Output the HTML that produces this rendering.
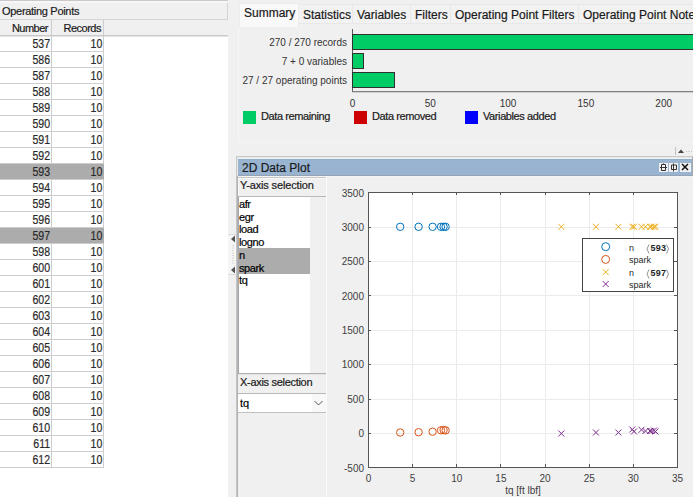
<!DOCTYPE html>
<html><head><meta charset="utf-8"><style>
*{margin:0;padding:0;box-sizing:border-box}
html,body{width:693px;height:497px;overflow:hidden;background:#f0f0f0;font-family:"Liberation Sans", sans-serif;color:#000}
.a{position:absolute}
.t{position:absolute;white-space:nowrap;line-height:1;-webkit-text-stroke:0.2px currentColor}
</style></head>
<body>
<div class="a" style="left:0px;top:0px;width:228px;height:1px;background:#c9c9c9"></div><div class="a" style="left:0px;top:1px;width:228px;height:2px;background:#f7f7f7"></div><div class="a" style="left:0px;top:3px;width:228px;height:17px;background:#f0f0f0;border-right:1px solid #d4d4d4;border-bottom:1px solid #d4d4d4"></div><div class="t" style="left:2px;top:6px;font-size:11px;letter-spacing:-0.3px;color:#1a1a1a">Operating Points</div><div class="a" style="left:0px;top:20px;width:228px;height:15px;background:#f0f0f0"></div><div class="a" style="left:0px;top:35px;width:228px;height:1px;background:#cacaca"></div><div class="a" style="left:51px;top:20px;width:1px;height:15px;background:#cdcdcd"></div><div class="a" style="left:103px;top:20px;width:1px;height:15px;background:#cdcdcd"></div><div class="t" style="right:645px;top:23px;font-size:11px;text-align:right;letter-spacing:-0.5px;color:#1a1a1a">Number</div><div class="t" style="right:592px;top:23px;font-size:11px;text-align:right;letter-spacing:-0.5px;color:#1a1a1a">Records</div><div class="a" style="left:0px;top:36px;width:228px;height:461px;background:#ffffff"></div><div class="a" style="left:0px;top:36px;width:228px;height:1px;background:#e4e4e4"></div><div class="a" style="left:51px;top:36px;width:1px;height:432px;background:#cdcdcd"></div><div class="a" style="left:103px;top:36px;width:1px;height:432px;background:#cdcdcd"></div><div class="a" style="left:0px;top:51px;width:104px;height:1px;background:#cdcdcd"></div><div class="t" style="right:643px;top:38px;font-size:12px;text-align:right;transform:scaleX(0.88);transform-origin:right;color:#2a2a2a">537</div><div class="t" style="right:591px;top:38px;font-size:12px;text-align:right;transform:scaleX(0.88);transform-origin:right;color:#2a2a2a">10</div><div class="a" style="left:0px;top:67px;width:104px;height:1px;background:#cdcdcd"></div><div class="t" style="right:643px;top:54px;font-size:12px;text-align:right;transform:scaleX(0.88);transform-origin:right;color:#2a2a2a">586</div><div class="t" style="right:591px;top:54px;font-size:12px;text-align:right;transform:scaleX(0.88);transform-origin:right;color:#2a2a2a">10</div><div class="a" style="left:0px;top:83px;width:104px;height:1px;background:#cdcdcd"></div><div class="t" style="right:643px;top:70px;font-size:12px;text-align:right;transform:scaleX(0.88);transform-origin:right;color:#2a2a2a">587</div><div class="t" style="right:591px;top:70px;font-size:12px;text-align:right;transform:scaleX(0.88);transform-origin:right;color:#2a2a2a">10</div><div class="a" style="left:0px;top:99px;width:104px;height:1px;background:#cdcdcd"></div><div class="t" style="right:643px;top:86px;font-size:12px;text-align:right;transform:scaleX(0.88);transform-origin:right;color:#2a2a2a">588</div><div class="t" style="right:591px;top:86px;font-size:12px;text-align:right;transform:scaleX(0.88);transform-origin:right;color:#2a2a2a">10</div><div class="a" style="left:0px;top:115px;width:104px;height:1px;background:#cdcdcd"></div><div class="t" style="right:643px;top:102px;font-size:12px;text-align:right;transform:scaleX(0.88);transform-origin:right;color:#2a2a2a">589</div><div class="t" style="right:591px;top:102px;font-size:12px;text-align:right;transform:scaleX(0.88);transform-origin:right;color:#2a2a2a">10</div><div class="a" style="left:0px;top:131px;width:104px;height:1px;background:#cdcdcd"></div><div class="t" style="right:643px;top:118px;font-size:12px;text-align:right;transform:scaleX(0.88);transform-origin:right;color:#2a2a2a">590</div><div class="t" style="right:591px;top:118px;font-size:12px;text-align:right;transform:scaleX(0.88);transform-origin:right;color:#2a2a2a">10</div><div class="a" style="left:0px;top:147px;width:104px;height:1px;background:#cdcdcd"></div><div class="t" style="right:643px;top:134px;font-size:12px;text-align:right;transform:scaleX(0.88);transform-origin:right;color:#2a2a2a">591</div><div class="t" style="right:591px;top:134px;font-size:12px;text-align:right;transform:scaleX(0.88);transform-origin:right;color:#2a2a2a">10</div><div class="a" style="left:0px;top:163px;width:104px;height:1px;background:#cdcdcd"></div><div class="t" style="right:643px;top:150px;font-size:12px;text-align:right;transform:scaleX(0.88);transform-origin:right;color:#2a2a2a">592</div><div class="t" style="right:591px;top:150px;font-size:12px;text-align:right;transform:scaleX(0.88);transform-origin:right;color:#2a2a2a">10</div><div class="a" style="left:0px;top:164px;width:104px;height:15px;background:#acacac"></div><div class="a" style="left:0px;top:179px;width:104px;height:1px;background:#cdcdcd"></div><div class="t" style="right:643px;top:166px;font-size:12px;text-align:right;transform:scaleX(0.88);transform-origin:right;color:#2a2a2a">593</div><div class="t" style="right:591px;top:166px;font-size:12px;text-align:right;transform:scaleX(0.88);transform-origin:right;color:#2a2a2a">10</div><div class="a" style="left:0px;top:195px;width:104px;height:1px;background:#cdcdcd"></div><div class="t" style="right:643px;top:182px;font-size:12px;text-align:right;transform:scaleX(0.88);transform-origin:right;color:#2a2a2a">594</div><div class="t" style="right:591px;top:182px;font-size:12px;text-align:right;transform:scaleX(0.88);transform-origin:right;color:#2a2a2a">10</div><div class="a" style="left:0px;top:211px;width:104px;height:1px;background:#cdcdcd"></div><div class="t" style="right:643px;top:198px;font-size:12px;text-align:right;transform:scaleX(0.88);transform-origin:right;color:#2a2a2a">595</div><div class="t" style="right:591px;top:198px;font-size:12px;text-align:right;transform:scaleX(0.88);transform-origin:right;color:#2a2a2a">10</div><div class="a" style="left:0px;top:227px;width:104px;height:1px;background:#cdcdcd"></div><div class="t" style="right:643px;top:214px;font-size:12px;text-align:right;transform:scaleX(0.88);transform-origin:right;color:#2a2a2a">596</div><div class="t" style="right:591px;top:214px;font-size:12px;text-align:right;transform:scaleX(0.88);transform-origin:right;color:#2a2a2a">10</div><div class="a" style="left:0px;top:228px;width:104px;height:15px;background:#acacac"></div><div class="a" style="left:0px;top:243px;width:104px;height:1px;background:#cdcdcd"></div><div class="t" style="right:643px;top:230px;font-size:12px;text-align:right;transform:scaleX(0.88);transform-origin:right;color:#2a2a2a">597</div><div class="t" style="right:591px;top:230px;font-size:12px;text-align:right;transform:scaleX(0.88);transform-origin:right;color:#2a2a2a">10</div><div class="a" style="left:0px;top:259px;width:104px;height:1px;background:#cdcdcd"></div><div class="t" style="right:643px;top:246px;font-size:12px;text-align:right;transform:scaleX(0.88);transform-origin:right;color:#2a2a2a">598</div><div class="t" style="right:591px;top:246px;font-size:12px;text-align:right;transform:scaleX(0.88);transform-origin:right;color:#2a2a2a">10</div><div class="a" style="left:0px;top:275px;width:104px;height:1px;background:#cdcdcd"></div><div class="t" style="right:643px;top:262px;font-size:12px;text-align:right;transform:scaleX(0.88);transform-origin:right;color:#2a2a2a">600</div><div class="t" style="right:591px;top:262px;font-size:12px;text-align:right;transform:scaleX(0.88);transform-origin:right;color:#2a2a2a">10</div><div class="a" style="left:0px;top:291px;width:104px;height:1px;background:#cdcdcd"></div><div class="t" style="right:643px;top:278px;font-size:12px;text-align:right;transform:scaleX(0.88);transform-origin:right;color:#2a2a2a">601</div><div class="t" style="right:591px;top:278px;font-size:12px;text-align:right;transform:scaleX(0.88);transform-origin:right;color:#2a2a2a">10</div><div class="a" style="left:0px;top:307px;width:104px;height:1px;background:#cdcdcd"></div><div class="t" style="right:643px;top:294px;font-size:12px;text-align:right;transform:scaleX(0.88);transform-origin:right;color:#2a2a2a">602</div><div class="t" style="right:591px;top:294px;font-size:12px;text-align:right;transform:scaleX(0.88);transform-origin:right;color:#2a2a2a">10</div><div class="a" style="left:0px;top:323px;width:104px;height:1px;background:#cdcdcd"></div><div class="t" style="right:643px;top:310px;font-size:12px;text-align:right;transform:scaleX(0.88);transform-origin:right;color:#2a2a2a">603</div><div class="t" style="right:591px;top:310px;font-size:12px;text-align:right;transform:scaleX(0.88);transform-origin:right;color:#2a2a2a">10</div><div class="a" style="left:0px;top:339px;width:104px;height:1px;background:#cdcdcd"></div><div class="t" style="right:643px;top:326px;font-size:12px;text-align:right;transform:scaleX(0.88);transform-origin:right;color:#2a2a2a">604</div><div class="t" style="right:591px;top:326px;font-size:12px;text-align:right;transform:scaleX(0.88);transform-origin:right;color:#2a2a2a">10</div><div class="a" style="left:0px;top:355px;width:104px;height:1px;background:#cdcdcd"></div><div class="t" style="right:643px;top:342px;font-size:12px;text-align:right;transform:scaleX(0.88);transform-origin:right;color:#2a2a2a">605</div><div class="t" style="right:591px;top:342px;font-size:12px;text-align:right;transform:scaleX(0.88);transform-origin:right;color:#2a2a2a">10</div><div class="a" style="left:0px;top:371px;width:104px;height:1px;background:#cdcdcd"></div><div class="t" style="right:643px;top:358px;font-size:12px;text-align:right;transform:scaleX(0.88);transform-origin:right;color:#2a2a2a">606</div><div class="t" style="right:591px;top:358px;font-size:12px;text-align:right;transform:scaleX(0.88);transform-origin:right;color:#2a2a2a">10</div><div class="a" style="left:0px;top:387px;width:104px;height:1px;background:#cdcdcd"></div><div class="t" style="right:643px;top:374px;font-size:12px;text-align:right;transform:scaleX(0.88);transform-origin:right;color:#2a2a2a">607</div><div class="t" style="right:591px;top:374px;font-size:12px;text-align:right;transform:scaleX(0.88);transform-origin:right;color:#2a2a2a">10</div><div class="a" style="left:0px;top:403px;width:104px;height:1px;background:#cdcdcd"></div><div class="t" style="right:643px;top:390px;font-size:12px;text-align:right;transform:scaleX(0.88);transform-origin:right;color:#2a2a2a">608</div><div class="t" style="right:591px;top:390px;font-size:12px;text-align:right;transform:scaleX(0.88);transform-origin:right;color:#2a2a2a">10</div><div class="a" style="left:0px;top:419px;width:104px;height:1px;background:#cdcdcd"></div><div class="t" style="right:643px;top:406px;font-size:12px;text-align:right;transform:scaleX(0.88);transform-origin:right;color:#2a2a2a">609</div><div class="t" style="right:591px;top:406px;font-size:12px;text-align:right;transform:scaleX(0.88);transform-origin:right;color:#2a2a2a">10</div><div class="a" style="left:0px;top:435px;width:104px;height:1px;background:#cdcdcd"></div><div class="t" style="right:643px;top:422px;font-size:12px;text-align:right;transform:scaleX(0.88);transform-origin:right;color:#2a2a2a">610</div><div class="t" style="right:591px;top:422px;font-size:12px;text-align:right;transform:scaleX(0.88);transform-origin:right;color:#2a2a2a">10</div><div class="a" style="left:0px;top:451px;width:104px;height:1px;background:#cdcdcd"></div><div class="t" style="right:643px;top:438px;font-size:12px;text-align:right;transform:scaleX(0.88);transform-origin:right;color:#2a2a2a">611</div><div class="t" style="right:591px;top:438px;font-size:12px;text-align:right;transform:scaleX(0.88);transform-origin:right;color:#2a2a2a">10</div><div class="a" style="left:0px;top:467px;width:104px;height:1px;background:#cdcdcd"></div><div class="t" style="right:643px;top:454px;font-size:12px;text-align:right;transform:scaleX(0.88);transform-origin:right;color:#2a2a2a">612</div><div class="t" style="right:591px;top:454px;font-size:12px;text-align:right;transform:scaleX(0.88);transform-origin:right;color:#2a2a2a">10</div><div class="a" style="left:228px;top:234px;width:8px;height:41px;background:#f5f5f5;border-top:1px solid #dcdcdc;border-bottom:1px solid #dcdcdc"></div><svg class="a" style="left:228px;top:234px" width="9" height="41"><path d="M7 1.5 L3 5 L7 8.5Z" fill="#555"/><path d="M7 32.5 L3 36 L7 39.5Z" fill="#555"/><path d="M5 11 V30" stroke="#bbb" stroke-dasharray="1 1.5"/></svg><div class="a" style="left:239px;top:3px;width:60px;height:24px;background:#f9f9f9;border:1px solid #ececec;border-bottom:none"></div><div class="t" style="left:244px;top:7px;font-size:12px;color:#1a1a1a">Summary</div><div class="a" style="left:299px;top:4px;width:54px;height:20px;background:#f2f2f2;border:1px solid #e8e8e8;border-left:none"></div><div class="t" style="left:303px;top:9px;font-size:12px;color:#1a1a1a">Statistics</div><div class="a" style="left:353px;top:4px;width:58px;height:20px;background:#f2f2f2;border:1px solid #e8e8e8;border-left:none"></div><div class="t" style="left:357px;top:9px;font-size:12px;color:#1a1a1a">Variables</div><div class="a" style="left:411px;top:4px;width:40px;height:20px;background:#f2f2f2;border:1px solid #e8e8e8;border-left:none"></div><div class="t" style="left:415px;top:9px;font-size:12px;color:#1a1a1a">Filters</div><div class="a" style="left:451px;top:4px;width:128px;height:20px;background:#f2f2f2;border:1px solid #e8e8e8;border-left:none"></div><div class="t" style="left:455px;top:9px;font-size:12px;color:#1a1a1a">Operating Point Filters</div><div class="a" style="left:579px;top:4px;width:141px;height:20px;background:#f2f2f2;border:1px solid #e8e8e8;border-left:none"></div><div class="t" style="left:583px;top:9px;font-size:12px;color:#1a1a1a">Operating Point Notes</div><div class="a" style="left:238px;top:27px;width:460px;height:116px;border-left:1px solid #f7f7f7;border-bottom:1px solid #f4f4f4;background:#f0f0f0"></div><div class="a" style="left:352px;top:29px;width:1px;height:63px;background:#5a5a5a"></div><div class="a" style="left:352px;top:91px;width:341px;height:1px;background:#808080"></div><div class="a" style="left:352px;top:92px;width:341px;height:1px;background:#d0d0d0"></div><div class="a" style="left:352px;top:34px;width:345px;height:16px;background:#00cc66;border:1px solid #303030"></div><div class="a" style="left:352px;top:53px;width:12px;height:16px;background:#00cc66;border:1px solid #303030"></div><div class="a" style="left:352px;top:72px;width:43px;height:16px;background:#00cc66;border:1px solid #303030"></div><div class="t" style="right:346px;top:38px;font-size:10px;text-align:right;color:#333;-webkit-text-stroke:0">270 / 270 records</div><div class="t" style="right:346px;top:57px;font-size:10px;text-align:right;color:#333;-webkit-text-stroke:0">7 + 0 variables</div><div class="t" style="right:346px;top:76px;font-size:10px;text-align:right;color:#333;-webkit-text-stroke:0">27 / 27 operating points</div><div class="t" style="left:302.5px;width:100px;top:99px;font-size:10px;text-align:center;color:#333;-webkit-text-stroke:0">0</div><div class="t" style="left:380.3px;width:100px;top:99px;font-size:10px;text-align:center;color:#333;-webkit-text-stroke:0">50</div><div class="t" style="left:458.1px;width:100px;top:99px;font-size:10px;text-align:center;color:#333;-webkit-text-stroke:0">100</div><div class="t" style="left:535.9px;width:100px;top:99px;font-size:10px;text-align:center;color:#333;-webkit-text-stroke:0">150</div><div class="t" style="left:613.7px;width:100px;top:99px;font-size:10px;text-align:center;color:#333;-webkit-text-stroke:0">200</div><div class="a" style="left:243px;top:111px;width:13px;height:13px;background:#00cc66"></div><div class="t" style="left:261px;top:111px;font-size:11px;letter-spacing:-0.4px;color:#1a1a1a">Data remaining</div><div class="a" style="left:354px;top:111px;width:13px;height:13px;background:#cc0000"></div><div class="t" style="left:372px;top:111px;font-size:11px;letter-spacing:-0.4px;color:#1a1a1a">Data removed</div><div class="a" style="left:465px;top:111px;width:13px;height:13px;background:#0000ff"></div><div class="t" style="left:483px;top:111px;font-size:11px;letter-spacing:-0.4px;color:#1a1a1a">Variables added</div><div class="a" style="left:675px;top:147px;width:1px;height:8px;background:#c0c0c0"></div><svg class="a" style="left:677px;top:147px" width="16" height="9"><path d="M1 6 L4 2.5 L7 6Z" fill="#444"/><path d="M9 4.5 H16" stroke="#bbb" stroke-dasharray="1 1.5"/></svg><div class="a" style="left:236px;top:156px;width:457px;height:341px;background:#f0f0f0;border-top:1px solid #c8c8c8;border-left:1px solid #c8c8c8"></div><div class="a" style="left:237px;top:157px;width:455px;height:1px;background:#e8e8e8"></div><div class="a" style="left:237px;top:157px;width:1px;height:19px;background:#e8e8e8"></div><div class="a" style="left:238px;top:158px;width:454px;height:1px;background:#eef2f7"></div><div class="a" style="left:236px;top:176px;width:1px;height:321px;background:#c4c4c4"></div><div class="a" style="left:237px;top:176px;width:1px;height:321px;background:#b2b2b2"></div><div class="a" style="left:238px;top:159px;width:454px;height:16px;background:#99b4d1"></div><div class="a" style="left:238px;top:159px;width:454px;height:1px;background:#91adca"></div><div class="a" style="left:238px;top:175px;width:454px;height:1px;background:#94a4b4"></div><div class="a" style="left:692px;top:157px;width:1px;height:19px;background:#a8a8a8"></div><div class="t" style="left:242px;top:162px;font-size:12px;color:#1a1a1a">2D Data Plot</div><div class="a" style="left:659px;top:163px;width:9px;height:9px;background:#f0f0f0"></div><div class="a" style="left:669px;top:163px;width:9px;height:9px;background:#f0f0f0"></div><div class="a" style="left:680px;top:163px;width:11px;height:9px;background:#f0f0f0"></div><svg class="a" style="left:659px;top:163px" width="33" height="9"><path d="M2.5 1.5 H6.5 V7.5 H2.5Z M1 4.5 H8 M4.5 0.5 V1.5" stroke="#333" fill="none" stroke-width="1"/><path d="M12.5 2 H17.5 V6.5 H12.5Z M14.5 0.5 V8.5" stroke="#333" fill="none" stroke-width="1"/><path d="M23 1 L29 7 M29 1 L23 7" stroke="#111" stroke-width="1.5"/></svg><div class="a" style="left:238px;top:176px;width:455px;height:1px;background:#f4f4f4"></div><div class="a" style="left:238px;top:177px;width:88px;height:1px;background:#c8c8c8"></div><div class="a" style="left:238px;top:178px;width:88px;height:1px;background:#f8f8f8"></div><div class="a" style="left:238px;top:179px;width:88px;height:17px;background:#f0f0f0;border-left:1px solid #f8f8f8"></div><div class="a" style="left:238px;top:196px;width:88px;height:1px;background:#b9b9b9"></div><div class="t" style="left:240px;top:180px;font-size:11px;letter-spacing:-0.15px;color:#1a1a1a">Y-axis selection</div><div class="a" style="left:238px;top:197px;width:88px;height:176px;background:#f0f0f0"></div><div class="a" style="left:238px;top:197px;width:72px;height:176px;background:#ffffff;border-left:1px solid #a3a7ae"></div><div class="t" style="left:239px;top:199.0px;font-size:11px;letter-spacing:-0.4px;color:#000">afr</div><div class="t" style="left:239px;top:211.7px;font-size:11px;letter-spacing:-0.4px;color:#000">egr</div><div class="t" style="left:239px;top:224.4px;font-size:11px;letter-spacing:-0.4px;color:#000">load</div><div class="t" style="left:239px;top:237.1px;font-size:11px;letter-spacing:-0.4px;color:#000">logno</div><div class="a" style="left:239px;top:248px;width:71px;height:13px;background:#acacac"></div><div class="t" style="left:239px;top:249.8px;font-size:11px;letter-spacing:-0.4px;color:#000">n</div><div class="a" style="left:239px;top:261px;width:71px;height:13px;background:#acacac"></div><div class="t" style="left:239px;top:262.5px;font-size:11px;letter-spacing:-0.4px;color:#000">spark</div><div class="t" style="left:239px;top:275.2px;font-size:11px;letter-spacing:-0.4px;color:#000">tq</div><div class="a" style="left:238px;top:373px;width:88px;height:1px;background:#b0b0b0"></div><div class="a" style="left:238px;top:374px;width:88px;height:1px;background:#e4e4e4"></div><div class="a" style="left:238px;top:375px;width:88px;height:18px;background:#f0f0f0"></div><div class="t" style="left:240px;top:377px;font-size:11px;letter-spacing:-0.3px;color:#1a1a1a">X-axis selection</div><div class="a" style="left:238px;top:393px;width:88px;height:1px;background:#b9b9b9"></div><div class="a" style="left:238px;top:394px;width:88px;height:18px;background:#f8f8f8"></div><div class="a" style="left:238px;top:394px;width:74px;height:18px;background:#ffffff"></div><div class="a" style="left:238px;top:412px;width:88px;height:1px;background:#c0c0c0"></div><div class="a" style="left:326px;top:176px;width:1px;height:321px;background:#fafafa"></div><div class="t" style="left:240px;top:398px;font-size:11px;color:#000">tq</div><svg class="a" style="left:313px;top:400px" width="10" height="6"><path d="M1.5 1 L5.5 5 L9.5 1" stroke="#555" fill="none"/></svg><svg class="a" style="left:0;top:0" width="693" height="497"><rect x="368" y="192" width="310" height="276" fill="#fff"/><line x1="412.5" y1="192" x2="412.5" y2="467" stroke="#ebebeb" stroke-width="1"/><line x1="456.5" y1="192" x2="456.5" y2="467" stroke="#ebebeb" stroke-width="1"/><line x1="500.5" y1="192" x2="500.5" y2="467" stroke="#ebebeb" stroke-width="1"/><line x1="545.5" y1="192" x2="545.5" y2="467" stroke="#ebebeb" stroke-width="1"/><line x1="589.5" y1="192" x2="589.5" y2="467" stroke="#ebebeb" stroke-width="1"/><line x1="633.5" y1="192" x2="633.5" y2="467" stroke="#ebebeb" stroke-width="1"/><line x1="368" y1="433.5" x2="677" y2="433.5" stroke="#ebebeb" stroke-width="1"/><line x1="368" y1="399.5" x2="677" y2="399.5" stroke="#ebebeb" stroke-width="1"/><line x1="368" y1="364.5" x2="677" y2="364.5" stroke="#ebebeb" stroke-width="1"/><line x1="368" y1="330.5" x2="677" y2="330.5" stroke="#ebebeb" stroke-width="1"/><line x1="368" y1="295.5" x2="677" y2="295.5" stroke="#ebebeb" stroke-width="1"/><line x1="368" y1="261.5" x2="677" y2="261.5" stroke="#ebebeb" stroke-width="1"/><line x1="368" y1="227.5" x2="677" y2="227.5" stroke="#ebebeb" stroke-width="1"/><rect x="368.5" y="192.5" width="309" height="275" fill="none" stroke="#555" stroke-width="1"/><line x1="412.5" y1="467" x2="412.5" y2="464" stroke="#555"/><line x1="412.5" y1="192" x2="412.5" y2="195" stroke="#555"/><line x1="456.5" y1="467" x2="456.5" y2="464" stroke="#555"/><line x1="456.5" y1="192" x2="456.5" y2="195" stroke="#555"/><line x1="500.5" y1="467" x2="500.5" y2="464" stroke="#555"/><line x1="500.5" y1="192" x2="500.5" y2="195" stroke="#555"/><line x1="545.5" y1="467" x2="545.5" y2="464" stroke="#555"/><line x1="545.5" y1="192" x2="545.5" y2="195" stroke="#555"/><line x1="589.5" y1="467" x2="589.5" y2="464" stroke="#555"/><line x1="589.5" y1="192" x2="589.5" y2="195" stroke="#555"/><line x1="633.5" y1="467" x2="633.5" y2="464" stroke="#555"/><line x1="633.5" y1="192" x2="633.5" y2="195" stroke="#555"/><line x1="368" y1="433.5" x2="371" y2="433.5" stroke="#555"/><line x1="677" y1="433.5" x2="674" y2="433.5" stroke="#555"/><line x1="368" y1="399.5" x2="371" y2="399.5" stroke="#555"/><line x1="677" y1="399.5" x2="674" y2="399.5" stroke="#555"/><line x1="368" y1="364.5" x2="371" y2="364.5" stroke="#555"/><line x1="677" y1="364.5" x2="674" y2="364.5" stroke="#555"/><line x1="368" y1="330.5" x2="371" y2="330.5" stroke="#555"/><line x1="677" y1="330.5" x2="674" y2="330.5" stroke="#555"/><line x1="368" y1="295.5" x2="371" y2="295.5" stroke="#555"/><line x1="677" y1="295.5" x2="674" y2="295.5" stroke="#555"/><line x1="368" y1="261.5" x2="371" y2="261.5" stroke="#555"/><line x1="677" y1="261.5" x2="674" y2="261.5" stroke="#555"/><line x1="368" y1="227.5" x2="371" y2="227.5" stroke="#555"/><line x1="677" y1="227.5" x2="674" y2="227.5" stroke="#555"/><circle cx="400.2" cy="226.8" r="3.7" fill="none" stroke="#0072bd" stroke-width="1"/><circle cx="418.6" cy="226.8" r="3.7" fill="none" stroke="#0072bd" stroke-width="1"/><circle cx="432.6" cy="226.8" r="3.7" fill="none" stroke="#0072bd" stroke-width="1"/><circle cx="441.0" cy="226.8" r="3.7" fill="none" stroke="#0072bd" stroke-width="1"/><circle cx="443.6" cy="226.8" r="3.7" fill="none" stroke="#0072bd" stroke-width="1"/><circle cx="445.6" cy="226.8" r="3.7" fill="none" stroke="#0072bd" stroke-width="1"/><circle cx="400.2" cy="432.5" r="3.7" fill="none" stroke="#d95319" stroke-width="1"/><circle cx="418.6" cy="432.2" r="3.7" fill="none" stroke="#d95319" stroke-width="1"/><circle cx="432.6" cy="431.7" r="3.7" fill="none" stroke="#d95319" stroke-width="1"/><circle cx="441.0" cy="430.3" r="3.7" fill="none" stroke="#d95319" stroke-width="1"/><circle cx="443.6" cy="430" r="3.7" fill="none" stroke="#d95319" stroke-width="1"/><circle cx="445.6" cy="430.4" r="3.7" fill="none" stroke="#d95319" stroke-width="1"/><path d="M558.3 223.8 L564.3 229.8 M564.3 223.8 L558.3 229.8" stroke="#edb120" stroke-width="1"/><path d="M592.9 223.8 L598.9 229.8 M598.9 223.8 L592.9 229.8" stroke="#edb120" stroke-width="1"/><path d="M615.4 223.8 L621.4 229.8 M621.4 223.8 L615.4 229.8" stroke="#edb120" stroke-width="1"/><path d="M629.3 223.8 L635.3 229.8 M635.3 223.8 L629.3 229.8" stroke="#edb120" stroke-width="1"/><path d="M631.0 223.8 L637.0 229.8 M637.0 223.8 L631.0 229.8" stroke="#edb120" stroke-width="1"/><path d="M638.5 223.8 L644.5 229.8 M644.5 223.8 L638.5 229.8" stroke="#edb120" stroke-width="1"/><path d="M642.5 223.8 L648.5 229.8 M648.5 223.8 L642.5 229.8" stroke="#edb120" stroke-width="1"/><path d="M647.0 223.8 L653.0 229.8 M653.0 223.8 L647.0 229.8" stroke="#edb120" stroke-width="1"/><path d="M648.5 223.8 L654.5 229.8 M654.5 223.8 L648.5 229.8" stroke="#edb120" stroke-width="1"/><path d="M651.0 223.8 L657.0 229.8 M657.0 223.8 L651.0 229.8" stroke="#edb120" stroke-width="1"/><path d="M652.5 223.8 L658.5 229.8 M658.5 223.8 L652.5 229.8" stroke="#edb120" stroke-width="1"/><path d="M558.3 430.5 L564.3 436.5 M564.3 430.5 L558.3 436.5" stroke="#7e2f8e" stroke-width="1"/><path d="M592.9 429.5 L598.9 435.5 M598.9 429.5 L592.9 435.5" stroke="#7e2f8e" stroke-width="1"/><path d="M615.4 429.5 L621.4 435.5 M621.4 429.5 L615.4 435.5" stroke="#7e2f8e" stroke-width="1"/><path d="M629.3 426.5 L635.3 432.5 M635.3 426.5 L629.3 432.5" stroke="#7e2f8e" stroke-width="1"/><path d="M631.0 428.5 L637.0 434.5 M637.0 428.5 L631.0 434.5" stroke="#7e2f8e" stroke-width="1"/><path d="M638.5 426.8 L644.5 432.8 M644.5 426.8 L638.5 432.8" stroke="#7e2f8e" stroke-width="1"/><path d="M642.5 428.0 L648.5 434.0 M648.5 428.0 L642.5 434.0" stroke="#7e2f8e" stroke-width="1"/><path d="M647.0 428.0 L653.0 434.0 M653.0 428.0 L647.0 434.0" stroke="#7e2f8e" stroke-width="1"/><path d="M648.5 428.0 L654.5 434.0 M654.5 428.0 L648.5 434.0" stroke="#7e2f8e" stroke-width="1"/><path d="M651.0 427.5 L657.0 433.5 M657.0 427.5 L651.0 433.5" stroke="#7e2f8e" stroke-width="1"/><path d="M652.5 428.5 L658.5 434.5 M658.5 428.5 L652.5 434.5" stroke="#7e2f8e" stroke-width="1"/><rect x="582.5" y="238.5" width="91" height="53" fill="#fff" stroke="#444" stroke-width="1"/><circle cx="605.7" cy="246.7" r="4" fill="none" stroke="#0072bd"/><circle cx="605.7" cy="259.4" r="4" fill="none" stroke="#d95319"/><path d="M602.7 269.1 L608.7 275.1 M608.7 269.1 L602.7 275.1" stroke="#edb120"/><path d="M602.7 281 L608.7 287 M608.7 281 L602.7 287" stroke="#7e2f8e"/></svg><div class="t" style="left:629px;top:243.5px;font-size:9px;color:#262626;-webkit-text-stroke:0">n</div><div class="t" style="left:650.5px;top:243.5px;font-size:9px;color:#262626;-webkit-text-stroke:0;letter-spacing:0.2px"><b>593</b></div><svg class="a" style="left:645px;top:244.0px" width="26" height="11"><path d="M4 0.5 L2 5 L4 9.5 M21.5 0.5 L23.5 5 L21.5 9.5" stroke="#777" stroke-width="0.8" fill="none"/></svg><div class="t" style="left:629px;top:256.1px;font-size:9px;color:#262626;-webkit-text-stroke:0">spark</div><div class="t" style="left:629px;top:268.7px;font-size:9px;color:#262626;-webkit-text-stroke:0">n</div><div class="t" style="left:650.5px;top:268.7px;font-size:9px;color:#262626;-webkit-text-stroke:0;letter-spacing:0.2px"><b>597</b></div><svg class="a" style="left:645px;top:269.2px" width="26" height="11"><path d="M4 0.5 L2 5 L4 9.5 M21.5 0.5 L23.5 5 L21.5 9.5" stroke="#777" stroke-width="0.8" fill="none"/></svg><div class="t" style="left:629px;top:281.3px;font-size:9px;color:#262626;-webkit-text-stroke:0">spark</div><div class="t" style="right:329px;top:463.5px;font-size:10px;text-align:right;color:#404040;-webkit-text-stroke:0">-500</div><div class="t" style="right:329px;top:429.125px;font-size:10px;text-align:right;color:#404040;-webkit-text-stroke:0">0</div><div class="t" style="right:329px;top:394.75px;font-size:10px;text-align:right;color:#404040;-webkit-text-stroke:0">500</div><div class="t" style="right:329px;top:360.375px;font-size:10px;text-align:right;color:#404040;-webkit-text-stroke:0">1000</div><div class="t" style="right:329px;top:326.0px;font-size:10px;text-align:right;color:#404040;-webkit-text-stroke:0">1500</div><div class="t" style="right:329px;top:291.625px;font-size:10px;text-align:right;color:#404040;-webkit-text-stroke:0">2000</div><div class="t" style="right:329px;top:257.25px;font-size:10px;text-align:right;color:#404040;-webkit-text-stroke:0">2500</div><div class="t" style="right:329px;top:222.875px;font-size:10px;text-align:right;color:#404040;-webkit-text-stroke:0">3000</div><div class="t" style="right:329px;top:188.5px;font-size:10px;text-align:right;color:#404040;-webkit-text-stroke:0">3500</div><div class="t" style="left:318.5px;width:100px;top:474px;font-size:10px;text-align:center;color:#404040;-webkit-text-stroke:0">0</div><div class="t" style="left:362.64285714285717px;width:100px;top:474px;font-size:10px;text-align:center;color:#404040;-webkit-text-stroke:0">5</div><div class="t" style="left:406.7857142857143px;width:100px;top:474px;font-size:10px;text-align:center;color:#404040;-webkit-text-stroke:0">10</div><div class="t" style="left:450.92857142857144px;width:100px;top:474px;font-size:10px;text-align:center;color:#404040;-webkit-text-stroke:0">15</div><div class="t" style="left:495.07142857142856px;width:100px;top:474px;font-size:10px;text-align:center;color:#404040;-webkit-text-stroke:0">20</div><div class="t" style="left:539.2142857142858px;width:100px;top:474px;font-size:10px;text-align:center;color:#404040;-webkit-text-stroke:0">25</div><div class="t" style="left:583.3571428571429px;width:100px;top:474px;font-size:10px;text-align:center;color:#404040;-webkit-text-stroke:0">30</div><div class="t" style="left:627.5px;width:100px;top:474px;font-size:10px;text-align:center;color:#404040;-webkit-text-stroke:0">35</div><div class="t" style="left:473px;width:100px;top:486px;font-size:10px;text-align:center;color:#404040;-webkit-text-stroke:0">tq [ft lbf]</div>
</body></html>
